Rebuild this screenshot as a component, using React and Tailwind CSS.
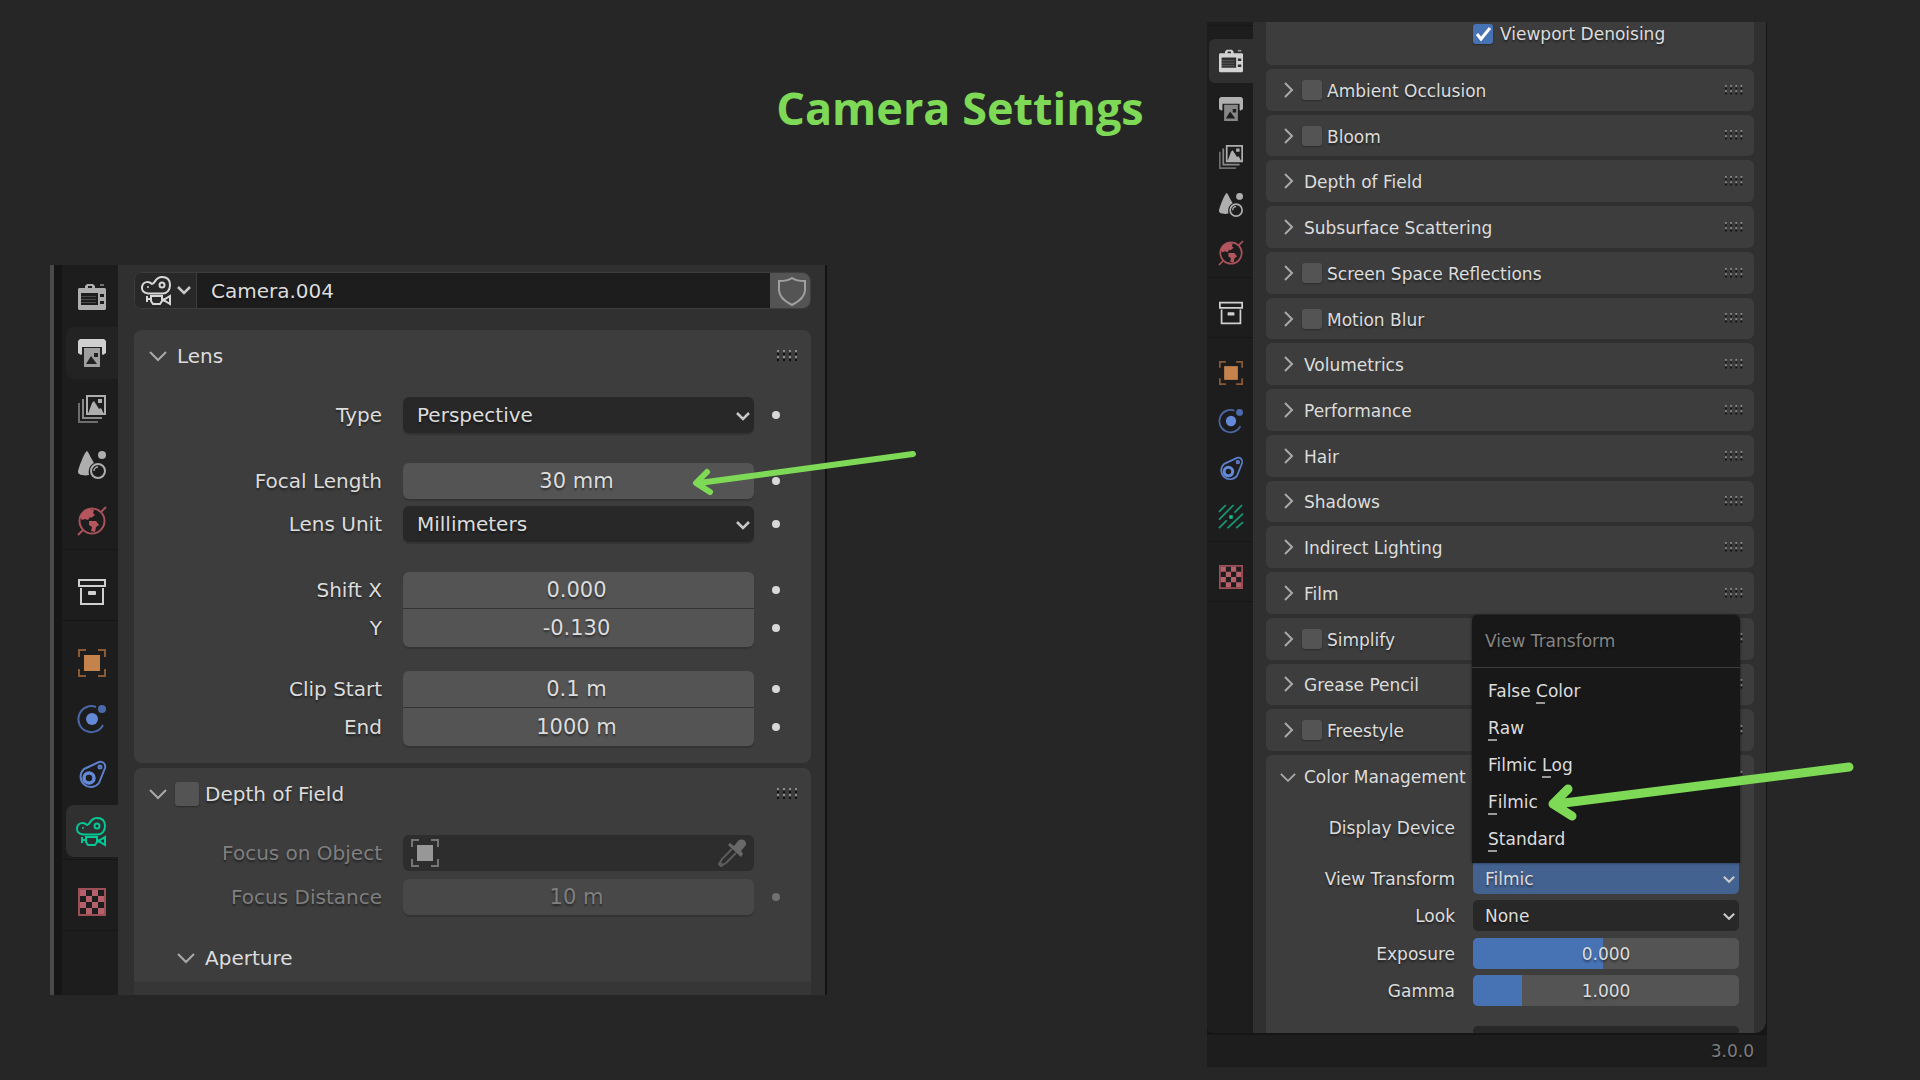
import React from "react";

const SHADOW = "[text-shadow:0_2px_2px_rgba(0,0,0,0.45)]";

/* ---------- icons ---------- */

function Svg({ className = "size-7", children }) {
  return (
    <svg viewBox="0 0 28 28" className={className} fill="none" aria-hidden="true">
      {children}
    </svg>
  );
}

function RenderIcon({ className }) {
  return (
    <Svg className={className}>
      <path
        fill="currentColor"
        fillRule="evenodd"
        d="M1 5H7V3L9 1H15L17 3V5H27L28 6V26L27 27H1L0 26V6ZM10 3V5H14V3ZM3 10V22H20V10ZM22 11V14H26V11ZM22 18V21H26V18Z"
      />
      <path stroke="currentColor" strokeOpacity="0.3" d="M3 13.5H18M3 16.5H18M3 19.5H18" />
      <path stroke="currentColor" strokeWidth="2" strokeOpacity="0.6" d="M22 2H26" />
    </Svg>
  );
}

function OutputIcon({ className }) {
  return (
    <Svg className={className}>
      <path fill="currentColor" fillOpacity="0.72" fillRule="evenodd" d="M6 9H22V28H6ZM8 25H19L13 17ZM16 14V18H20V14Z" />
      <path fill="currentColor" d="M2 0H26L28 2V14L25 16L24 15V8H4V15L3 16L0 14V2Z" />
    </Svg>
  );
}

function ViewLayerIcon({ className }) {
  return (
    <Svg className={className}>
      <path stroke="currentColor" strokeWidth="2" d="M9 1H27V19H9Z" />
      <path fill="currentColor" d="M10 19L14 8L16 6L21 14L23 13L26 19ZM20 4H24V8H20Z" />
      <path stroke="currentColor" strokeOpacity="0.75" strokeWidth="2" d="M5 4V23H24" />
      <path stroke="currentColor" strokeOpacity="0.55" strokeWidth="2" d="M1 8V27H20" />
    </Svg>
  );
}

function SceneIcon({ className }) {
  return (
    <Svg className={className}>
      <path fill="currentColor" d="M9 0C10 0 14 9 16 12C12 14 10 18 11 24C6 25 0 24 0 21C0 18 7 0 9 0Z" />
      <circle cx="24" cy="4" r="4" fill="currentColor" />
      <circle cx="20" cy="20" r="7" stroke="currentColor" strokeWidth="2" />
      <path stroke="currentColor" strokeWidth="1.5" d="M16 20A4 4 0 0 1 20 16" />
    </Svg>
  );
}

function WorldIcon({ className }) {
  return (
    <Svg className={className}>
      <circle cx="14" cy="14" r="12.5" stroke="#a8525a" strokeWidth="2" />
      <path stroke="#a8525a" strokeWidth="2" d="M23 5L28 0M5 23L0 28" />
      <path fill="#b5565f" d="M2 10L6 4L11 2L16 3L15 6L17 8L13 11L12 10L10 13L7 12L4 13ZM11 14L18 14L21 18L18 20L17 25L13 24L14 20L11 18Z" />
    </Svg>
  );
}

function CollectionIcon({ className }) {
  return (
    <Svg className={className}>
      <path stroke="#d0d0d0" strokeWidth="2" d="M1 2H27V8H1ZM3 10V26H25V10" />
      <rect x="10" y="13" width="8" height="4" rx="1" fill="#d0d0d0" />
    </Svg>
  );
}

function ObjectIcon({ className, gray }) {
  return (
    <Svg className={className}>
      <path stroke={gray ? "#757575" : "#8a5a35"} strokeWidth="2" d="M1 8V1H8M20 1H27V8M27 20V27H20M8 27H1V20" />
      <rect x="6" y="6" width="16" height="16" fill={gray ? "#979797" : "#c4824c"} />
    </Svg>
  );
}

function PhysicsIcon({ className }) {
  return (
    <Svg className={className}>
      <path stroke="#4a67a5" strokeWidth="2" d="M18 2A13 13 0 1 0 25 20" />
      <circle cx="14" cy="14" r="6" fill="#6389d8" />
      <circle cx="24" cy="4" r="4" fill="#4c6aab" />
    </Svg>
  );
}

function ConstraintIcon({ className }) {
  return (
    <Svg className={className}>
      <path stroke="#5c80cc" strokeWidth="2" d="M6 8L21 1C25 0 28 3 27 7L21 22A10.300 10.300 0 1 1 6 8Z" />
      <circle cx="11" cy="17" r="5" stroke="#6389d8" strokeWidth="3.500" />
      <circle cx="22" cy="6" r="1.500" stroke="#5c80cc" strokeWidth="2" />
    </Svg>
  );
}

function CameraIcon({ className }) {
  return (
    <Svg className={className}>
      <g stroke="currentColor" strokeWidth="2">
        <path d="M5 17.500C0 17 -1.500 14 -1 11C0 5 6 5 9 8C12 8 12 1 19 1C25 1 27 5 27 9C27 14 24 17.500 20 17.500Z" />
        <circle cx="19" cy="9" r="2.500" />
        <path d="M8 20H19V25L17 28H10L8 25ZM8 23H4M4 20V26M19 24L22 23L27 20V28L22 25L19 24" />
      </g>
      <circle cx="5" cy="11" r="1" fill="currentColor" />
    </Svg>
  );
}

function ProbeIcon({ className }) {
  return (
    <Svg className={className}>
      <path
        stroke="#169a76"
        strokeWidth="2"
        d="M0 8L8 0M0 17L17 0M18 9L27 0M0 27L9 18M10 27L28 10M20 27L28 20"
      />
      <rect x="12" y="12" width="4" height="4" fill="#12c08d" />
    </Svg>
  );
}

function TextureIcon({ className }) {
  return (
    <Svg className={className}>
      <path stroke="#9d4f57" strokeWidth="2" d="M1 1H27V27H1Z" />
      <path
        fill="#b5606a"
        d="M2 2H8V8H2ZM14 2H20V8H14ZM8 8H14V14H8ZM20 8H26V14H20ZM2 14H8V20H2ZM14 14H20V20H14ZM8 20H14V26H8ZM20 20H26V26H20Z"
      />
    </Svg>
  );
}

function Eyedropper() {
  return (
    <Svg className="size-7">
      <path fill="#686868" d="M20 2C23 -1 29 1 28 6L23 12L25 15L23 18L10 6L12 4L16 7Z" />
      <path stroke="#5c5c5c" strokeWidth="2" d="M14 10L4 20L1 25L3 27L8 24L18 14" />
      <path fill="#5c5c5c" d="M0 25L3 23L6 26L3 28Z" />
    </Svg>
  );
}

function Chevron({ dir = "down", className = "w-[18px]" }) {
  return dir === "down" ? (
    <svg viewBox="0 0 18 12" className={className} fill="none" aria-hidden="true">
      <path d="M1 2L9 10L17 2" stroke="#a9a9a9" strokeWidth="2" />
    </svg>
  ) : (
    <svg viewBox="0 0 10 16" className={className} fill="none" aria-hidden="true">
      <path d="M1 1L8 8L1 15" stroke="#a9a9a9" strokeWidth="2" />
    </svg>
  );
}

function SmallChevron({ className }) {
  return (
    <svg viewBox="0 0 14 10" className={className} fill="none" aria-hidden="true">
      <path d="M1 2L7 8L13 2" stroke="#c8c8c8" strokeWidth="2.500" />
    </svg>
  );
}

function Grip({ className = "w-[22px]" }) {
  const cols = [0, 6, 12, 18];
  return (
    <svg viewBox="0 0 22 12" className={className} aria-hidden="true">
      {cols.map((x) => (
        <g key={x}>
          <path fill="#8c8c8c" d={`M${x} 0h2v2h-2zM${x} 6h2v2h-2z`} />
          <path fill="#111111" d={`M${x} 3h2v2h-2zM${x} 9h2v2h-2z`} />
        </g>
      ))}
    </svg>
  );
}

/* ---------- shared pieces ---------- */

function CheckBox({ id, className, label, checked }) {
  return (
    <span className={`relative grid shrink-0 ${className}`}>
      <input
        id={id}
        type="checkbox"
        defaultChecked={checked}
        aria-label={label}
        className="peer size-full appearance-none rounded-[3px] bg-[#545454] shadow-[0_1px_2px_rgba(0,0,0,0.3)] checked:bg-[#4772b3]"
      />
      <svg viewBox="0 0 20 20" className="pointer-events-none absolute inset-0 hidden peer-checked:block" fill="none" aria-hidden="true">
        <path d="M4 10L8 15L17 4" stroke="#ffffff" strokeWidth="3" />
      </svg>
    </span>
  );
}

function TabGroup({ children }) {
  return <div className="border-b border-[#161616]">{children}</div>;
}

/* ---------- left editor ---------- */

function BigTab({ icon: Icon, label, tone = "", state = "" }) {
  return (
    <button type="button" aria-label={label} className={`flex h-14 w-full items-center py-[2px] pl-1 ${tone}`}>
      <span className={`flex h-full w-full items-center justify-center rounded-l-lg ${state}`}>
        <Icon className="size-7 overflow-visible" />
      </span>
    </button>
  );
}

function BigTabs() {
  return (
    <nav aria-label="Properties" className="flex w-14 shrink-0 flex-col gap-[14px] bg-[#1d1d1d] pt-1">
      <TabGroup>
        <BigTab icon={RenderIcon} label="Render" tone="text-[#aeaeae]" />
        <BigTab icon={OutputIcon} label="Output" tone="text-[#d0d0d0]" state="bg-[#232323]" />
        <BigTab icon={ViewLayerIcon} label="View Layer" tone="text-[#aeaeae]" />
        <BigTab icon={SceneIcon} label="Scene" tone="text-[#aeaeae]" />
        <BigTab icon={WorldIcon} label="World" />
      </TabGroup>
      <TabGroup>
        <BigTab icon={CollectionIcon} label="Collection" />
      </TabGroup>
      <TabGroup>
        <BigTab icon={ObjectIcon} label="Object" />
        <BigTab icon={PhysicsIcon} label="Physics" />
        <BigTab icon={ConstraintIcon} label="Constraints" />
        <BigTab icon={CameraIcon} label="Object Data" tone="text-[#00c896]" state="bg-[#303030]" />
      </TabGroup>
      <TabGroup>
        <BigTab icon={TextureIcon} label="Texture" />
      </TabGroup>
    </nav>
  );
}

function BigRow({ id, label, dot = true, dim, className = "", children }) {
  return (
    <div className={`grid grid-cols-[269fr_351fr_57fr] items-center ${className}`}>
      <label htmlFor={id} className={`pr-[21px] text-right ${dim ? "text-[#7f7f7f]" : ""}`}>
        {label}
      </label>
      <div className="relative">{children}</div>
      <span className="pl-[18px]">
        {dot && <i className={`block size-2 rounded-full ${dim ? "bg-[#707070]" : "bg-[#d8d8d8]"}`} />}
      </span>
    </div>
  );
}

function BigSelect({ id, value }) {
  return (
    <>
      <select
        id={id}
        className={`block h-9 w-full appearance-none rounded-md bg-[#282828] pl-[14px] shadow-[0_2px_1px_rgba(0,0,0,0.15)] ${SHADOW}`}
      >
        <option>{value}</option>
      </select>
      <SmallChevron className="pointer-events-none absolute top-[14px] right-1 w-[14px]" />
    </>
  );
}

function BigNumber({ id, value, shape = "rounded-md h-9", dim }) {
  return (
    <input
      id={id}
      type="text"
      defaultValue={value}
      disabled={dim}
      className={`block w-full pr-1 text-center text-[21px] shadow-[0_2px_1px_rgba(0,0,0,0.15)] ${SHADOW} ${shape} ${
        dim ? "bg-[#484848] text-[#7f7f7f]" : "bg-[#545454]"
      }`}
    />
  );
}

function CameraEditor() {
  return (
    <section
      aria-label="Camera properties"
      className={`col-start-2 row-start-2 flex self-start border-l-4 border-[#4a4a4a] text-[20px] leading-6 text-[#dcdcdc] ${SHADOW}`}
    >
      <div className="w-2 shrink-0 bg-[#161616]" />
      <BigTabs />
      <div className="min-w-0 flex-1 border-r-2 border-[#131313] bg-[#303030] pt-[7px] pr-[14px] pl-4">
        <div className="flex h-[37px] overflow-hidden rounded-lg border border-[#3d3d3d] bg-[#1d1d1d]">
          <button type="button" aria-label="Browse camera data" className="flex w-[62px] items-center gap-[6px] border-r border-[#3d3d3d] bg-[#282828] pb-[2px] pl-2">
            <CameraIcon className="size-[28px] overflow-visible text-[#d8d8d8]" />
            <SmallChevron className="w-[14px]" />
          </button>
          <input type="text" aria-label="Name" defaultValue="Camera.004" className={`min-w-0 flex-1 pl-[14px] ${SHADOW}`} />
          <button type="button" aria-label="Fake user" className="flex w-10 items-center justify-center bg-[#545454] pl-1">
            <svg viewBox="0 0 28 30" className="w-7" fill="none" aria-hidden="true">
              <path d="M14 2C11 4 6 5 1 5V14C1 21 8 26 14 29C20 26 27 21 27 14V5C22 5 17 4 14 2Z" stroke="#a0a0a0" strokeWidth="2" />
            </svg>
          </button>
        </div>

        <div className="mt-[21px] rounded-lg bg-[#3d3d3d] pb-[17px]">
          <div className="flex h-[67px] items-start pt-[14px] pr-3">
            <button type="button" className="flex items-center gap-[10px] pl-[15px]">
              <Chevron />
              Lens
            </button>
            <Grip className="mt-[6px] ml-auto w-[22px]" />
          </div>
          <BigRow id="type" label="Type">
            <BigSelect id="type" value="Perspective" />
          </BigRow>
          <BigRow id="focal" label="Focal Length" className="mt-[30px]">
            <BigNumber id="focal" value="30 mm" />
            <svg
              viewBox="0 0 230 52"
              className="pointer-events-none absolute -top-4 right-[-165px] z-10 w-[230px]"
              fill="none"
              aria-hidden="true"
            >
              <path d="M224 7L10 36M18 25L7 36L21 45" stroke="#7ed957" strokeWidth="6" strokeLinecap="round" strokeLinejoin="round" />
            </svg>
          </BigRow>
          <BigRow id="unit" label="Lens Unit" className="mt-[7px]">
            <BigSelect id="unit" value="Millimeters" />
          </BigRow>
          <BigRow id="shiftx" label="Shift X" className="mt-[30px]">
            <BigNumber id="shiftx" value="0.000" shape="h-9 rounded-t-md" />
          </BigRow>
          <BigRow id="shifty" label="Y" className="mt-px">
            <BigNumber id="shifty" value="-0.130" shape="h-[38px] rounded-b-md" />
          </BigRow>
          <BigRow id="clipstart" label="Clip Start" className="mt-6">
            <BigNumber id="clipstart" value="0.1 m" shape="h-9 rounded-t-md" />
          </BigRow>
          <BigRow id="clipend" label="End" className="mt-px">
            <BigNumber id="clipend" value="1000 m" shape="h-[38px] rounded-b-md" />
          </BigRow>
        </div>

        <div className="mt-[5px] rounded-t-lg bg-[#3d3d3d]">
          <div className="flex h-[67px] items-start pt-[14px] pr-3">
            <div className="flex items-center pl-[15px]">
              <button type="button" aria-label="Collapse Depth of Field">
                <Chevron />
              </button>
              <CheckBox id="dof" className="ml-2 size-6" />
              <label htmlFor="dof" className="pl-[6px]">
                Depth of Field
              </label>
            </div>
            <Grip className="mt-[6px] ml-auto w-[22px]" />
          </div>
          <BigRow id="focusobj" label="Focus on Object" dim dot={false}>
            <div className="flex h-9 items-center rounded-md bg-[#2d2d2d] px-2">
              <ObjectIcon gray className="size-7" />
              <input id="focusobj" type="text" disabled className="min-w-0 flex-1" />
              <Eyedropper />
            </div>
          </BigRow>
          <BigRow id="focusdist" label="Focus Distance" dim className="mt-2">
            <BigNumber id="focusdist" value="10 m" dim />
          </BigRow>
          <button type="button" className="mt-[31px] flex items-center gap-[10px] pl-[43px]">
            <Chevron />
            Aperture
          </button>
          <div className="mt-3 h-[13px] bg-[#363636]" />
        </div>
      </div>
    </section>
  );
}

/* ---------- right editor ---------- */

function SmallTab({ icon: Icon, label, tone = "", active }) {
  return (
    <button type="button" aria-label={label} className={`flex h-12 w-full items-center py-[2px] pl-[2px] ${tone}`}>
      <span className={`flex h-full w-full items-center justify-center rounded-l-md ${active ? "bg-[#303030]" : ""}`}>
        <Icon className="size-6 overflow-visible" />
      </span>
    </button>
  );
}

function SmallTabs() {
  return (
    <nav aria-label="Properties" className="flex w-[46px] shrink-0 flex-col gap-[11px] rounded-bl-md bg-[#1d1d1d] pt-[3px]">
      <div className="border-t border-[#161616]" />
      <TabGroup>
        <SmallTab icon={RenderIcon} label="Render" tone="text-[#d2d2d2]" active />
        <SmallTab icon={OutputIcon} label="Output" tone="text-[#b0b0b0]" />
        <SmallTab icon={ViewLayerIcon} label="View Layer" tone="text-[#aeaeae]" />
        <SmallTab icon={SceneIcon} label="Scene" tone="text-[#aeaeae]" />
        <SmallTab icon={WorldIcon} label="World" />
      </TabGroup>
      <TabGroup>
        <SmallTab icon={CollectionIcon} label="Collection" />
      </TabGroup>
      <TabGroup>
        <SmallTab icon={ObjectIcon} label="Object" />
        <SmallTab icon={PhysicsIcon} label="Physics" />
        <SmallTab icon={ConstraintIcon} label="Constraints" />
        <SmallTab icon={ProbeIcon} label="Object Data" />
      </TabGroup>
      <TabGroup>
        <SmallTab icon={TextureIcon} label="Texture" />
      </TabGroup>
    </nav>
  );
}

const PANELS = [
  ["Ambient Occlusion", true],
  ["Bloom", true],
  ["Depth of Field"],
  ["Subsurface Scattering"],
  ["Screen Space Reflections", true],
  ["Motion Blur", true],
  ["Volumetrics"],
  ["Performance"],
  ["Hair"],
  ["Shadows"],
  ["Indirect Lighting"],
  ["Film"],
  ["Simplify", true],
  ["Grease Pencil"],
  ["Freestyle", true],
];

function PanelHeader({ title, check }) {
  return (
    <div className="flex items-center rounded-md bg-[#3d3d3d] pr-[10px] pl-[18px]">
      {check ? (
        <>
          <button type="button" aria-label={`Expand ${title}`}>
            <Chevron dir="right" className="w-[10px]" />
          </button>
          <CheckBox className="ml-2 size-5" label={title} />
          <span className="pt-[2px] pl-[5px]">{title}</span>
        </>
      ) : (
        <button type="button" className="flex items-center gap-[10px]">
          <Chevron dir="right" className="w-[10px]" />
          <span className="pt-[2px]">{title}</span>
        </button>
      )}
      <Grip className="ml-auto w-[19px]" />
    </div>
  );
}

function Row({ id, label, className = "", children }) {
  return (
    <div className={`grid grid-cols-[207fr_266fr_15fr] items-center ${className}`}>
      <label htmlFor={id} className="pr-[18px] text-right">
        {label}
      </label>
      <div className="relative">{children}</div>
    </div>
  );
}

function Select({ id, value, tone = "rounded-[5px] bg-[#282828]" }) {
  return (
    <>
      <select id={id} className={`block h-[31px] w-full appearance-none pl-3 ${SHADOW} ${tone}`}>
        <option>{value}</option>
      </select>
      <SmallChevron className="pointer-events-none absolute top-3 right-1 w-3" />
    </>
  );
}

function Slider({ id, value, min, max, fill }) {
  return (
    <div className="relative h-[31px] overflow-hidden rounded-[5px] bg-[#545454]">
      <div className="h-full bg-[#4772b3]" style={{ width: `${fill}%` }} />
      <output htmlFor={id} className="absolute inset-0 flex items-center justify-center">
        {value}
      </output>
      <input id={id} type="range" min={min} max={max} step="0.1" defaultValue={value} className="absolute inset-0 w-full opacity-0" />
    </div>
  );
}

const MENU = [
  ["False ", "C", "olor"],
  ["", "R", "aw"],
  ["Filmic ", "L", "og"],
  ["", "F", "ilmic"],
  ["", "S", "tandard"],
];

function TransformMenu() {
  return (
    <div role="menu" aria-label="View Transform" className="absolute -inset-x-px bottom-full z-10 rounded-t-md bg-[#181818] shadow-[0_0_3px_rgba(0,0,0,0.6)]">
      <div className="flex h-[52px] items-center pl-[13px] text-[#858585]">View Transform</div>
      <div className="border-t border-[#3d3d3d] pt-1 pb-[6px]">
        {MENU.map(([before, key, after]) => (
          <button key={before + key + after} type="button" role="menuitem" className="relative flex h-[37px] w-full items-center pl-4 whitespace-pre">
            {before}
            <span className="relative after:absolute after:bottom-[-3px] after:left-0 after:h-[2px] after:w-[9px] after:bg-[#9a9a9a]">{key}</span>
            {after}
            {key === "F" && (
              <svg
                viewBox="0 0 310 64"
                className="pointer-events-none absolute -top-6 left-[74px] w-[310px] max-w-none"
                fill="none"
                aria-hidden="true"
              >
                <path d="M303 8L10 45M22 30L7 45L26 57" stroke="#7ed957" strokeWidth="9" strokeLinecap="round" strokeLinejoin="round" />
              </svg>
            )}
          </button>
        ))}
      </div>
    </div>
  );
}

function RenderEditor() {
  return (
    <section
      aria-label="Render properties"
      className={`col-start-4 row-span-2 row-start-1 mt-[22px] self-start bg-[#161616] text-[17px] leading-5 text-[#dcdcdc] ${SHADOW}`}
    >
      <div className="flex">
        <SmallTabs />
        <div className="min-w-0 flex-1 rounded-br-xl border-r border-[#161616] bg-[#303030] pr-3 pl-[13px]">
          <div className="grid h-[43px] grid-cols-[207fr_281fr] rounded-b-md bg-[#3d3d3d]">
            <div className="col-start-2 flex items-start gap-[7px] pt-[2px]">
              <CheckBox id="denoise" className="size-5" checked />
              <label htmlFor="denoise">Viewport Denoising</label>
            </div>
          </div>
          <div className="mt-1 grid min-h-[682px] auto-rows-fr gap-1">
            {PANELS.map(([title, check]) => (
              <PanelHeader key={title} title={title} check={check} />
            ))}
          </div>
          <div className="mt-1 rounded-t-md bg-[#3d3d3d]">
            <div className="flex h-[57px] items-start pt-3 pr-[10px] pl-[14px]">
              <button type="button" className="flex items-center gap-2">
                <Chevron className="w-4" />
                Color Management
              </button>
              <Grip className="mt-1 ml-auto w-[19px]" />
            </div>
            <Row id="display" label="Display Device">
              <Select id="display" value="sRGB" />
            </Row>
            <Row id="view" label="View Transform" className="mt-5">
              <Select id="view" value="Filmic" tone="rounded-b-[5px] bg-[#446290]" />
              <TransformMenu />
            </Row>
            <Row id="look" label="Look" className="mt-[6px]">
              <Select id="look" value="None" />
            </Row>
            <Row id="exposure" label="Exposure" className="mt-[7px]">
              <Slider id="exposure" value="0.000" min="-10" max="10" fill={49} />
            </Row>
            <Row id="gamma" label="Gamma" className="mt-[6px]">
              <Slider id="gamma" value="1.000" min="0" max="5" fill={18.5} />
            </Row>
            <div className="mt-5 grid grid-cols-[207fr_266fr_15fr]">
              <div className="col-start-2 h-[7px] rounded-t-[5px] bg-[#282828]" />
            </div>
          </div>
        </div>
      </div>
      <footer className="mt-[2px] flex h-8 items-center justify-end bg-[#1d1d1d] pr-[13px] text-[#7d7d7d]">3.0.0</footer>
    </section>
  );
}

export default function App() {
  return (
    <main className="grid min-h-screen grid-cols-[50fr_777fr_380fr_560fr_153fr] grid-rows-[auto_1fr] overflow-hidden bg-[#262626] font-['DejaVu_Sans',sans-serif]">
      <h1 className="col-span-full row-start-1 pt-[76px] pb-[125px] text-center font-['Open_Sans',sans-serif] text-[45px] leading-[64px] font-bold text-[#7ed957]">
        Camera Settings
      </h1>
      <CameraEditor />
      <RenderEditor />
    </main>
  );
}
